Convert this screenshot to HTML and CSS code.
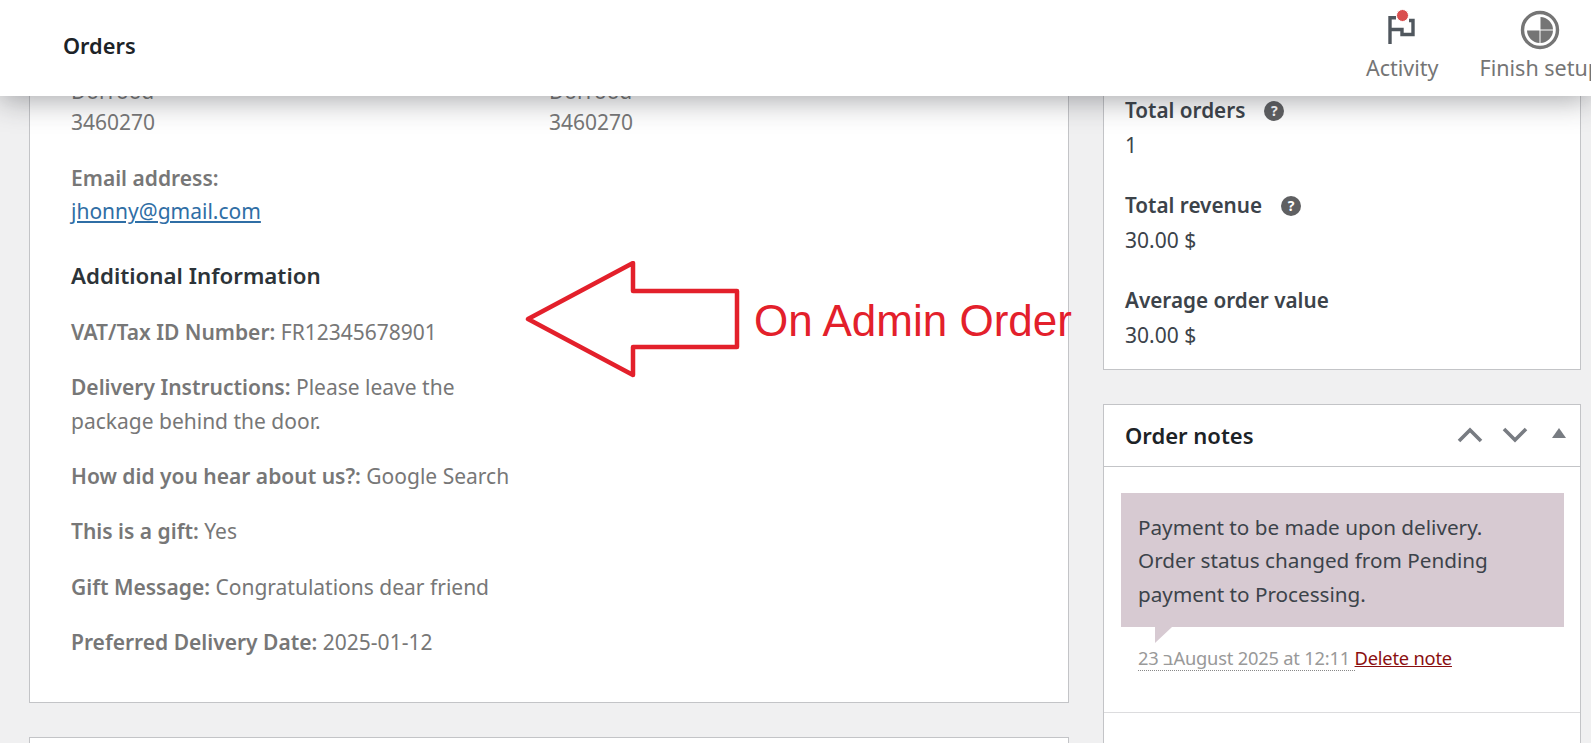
FILE: index.html
```html
<!DOCTYPE html>
<html lang="en">
<head>
<meta charset="utf-8">
<title>Orders</title>
<link rel="stylesheet" href="styles.css">
</head>
<body>
<header class="topbar">
  <h1 class="page-title">Orders</h1>
  <nav class="activity">
    <div class="activity-item">
      <svg class="activity-icon" width="48" height="48" viewBox="0 0 48 48">
        <path class="flag" d="M12 44V17.7H18M13 29.5H24V34.5H35V20.5H31"/>
        <circle class="flag-dot" cx="24.5" cy="15.5" r="6"/>
      </svg>
      <span>Activity</span>
    </div>
    <div class="activity-item setup">
      <svg class="activity-icon" width="42" height="42" viewBox="0 0 42 42">
        <circle class="ring" cx="21" cy="21" r="17.5"/>
        <path class="pie" d="M21.500 8a13 13 0 0 1 12.500 12.500H21.500zM20.500 21.500v12.500a13 13 0 0 1-12.500-12.500zM21.500 21.500h12.500a13 13 0 0 1-12.500 12.500z"/>
      </svg>
      <span>Finish setup</span>
    </div>
  </nav>
</header>
<main class="columns">
  <div class="left-col">
    <section class="card details">
      <div class="addresses">
        <p class="address">Dorrood<br>3460270</p>
        <p class="address">Dorrood<br>3460270</p>
      </div>
      <p class="field"><strong>Email address:</strong><br><a href="#">jhonny@gmail.com</a></p>
      <h3 class="section-title">Additional Information</h3>
      <p class="field"><strong>VAT/Tax ID Number:</strong> FR12345678901</p>
      <p class="field"><strong>Delivery Instructions:</strong> Please leave the package behind the door.</p>
      <p class="field"><strong>How did you hear about us?:</strong> Google Search</p>
      <p class="field"><strong>This is a gift:</strong> Yes</p>
      <p class="field"><strong>Gift Message:</strong> Congratulations dear friend</p>
      <p class="field"><strong>Preferred Delivery Date:</strong> 2025-01-12</p>
      <svg class="annotation-arrow" width="222" height="120" viewBox="0 0 222 120">
        <path d="M3 58L108 2V30H212V86H108V114Z"/>
      </svg>
      <span class="annotation-text">On Admin Order</span>
    </section>
    <section class="card stub"></section>
  </div>
  <aside class="right-col">
    <section class="card stats">
      <div class="stat"><h4>Total orders <span class="help">?</span></h4><p>1</p></div>
      <div class="stat"><h4>Total revenue <span class="help">?</span></h4><p>30.00 $</p></div>
      <div class="stat"><h4>Average order value</h4><p>30.00 $</p></div>
    </section>
    <section class="card notes">
      <div class="notes-head">
        <h2>Order notes</h2>
        <div class="notes-tools">
          <svg width="26" height="16" viewBox="0 0 26 16"><path class="chev" d="M2 14L13 3l11 11"/></svg>
          <svg width="26" height="16" viewBox="0 0 26 16"><path class="chev" d="M2 2l11 11L24 2"/></svg>
          <svg class="tri" width="14" height="10" viewBox="0 0 14 10"><path d="M0 10L7 0l7 10z"/></svg>
        </div>
      </div>
      <div class="notes-body">
        <div class="note-bubble">Payment to be made upon delivery. Order status changed from Pending payment to Processing.</div>
        <p class="note-meta"><abbr>23 בAugust 2025 at 12:11 </abbr><a href="#">Delete note</a></p>
      </div>
      <div class="notes-foot"></div>
    </section>
  </aside>
</main>
</body>
</html>
```
FILE: styles.css
```css
* { box-sizing: border-box; }
html, body { margin: 0; height: 100%; overflow: hidden; }
body {
  background: #f0f0f1;
  color: #3c434a;
  font-family: "Noto Sans", "DejaVu Sans", sans-serif;
  font-size: 21px;
  line-height: 33.4px;
}
p, h1, h2, h3, h4 { margin: 0; }

.topbar {
  position: absolute;
  top: 0; left: 0; right: 0;
  height: 96px;
  z-index: 5;
  background: #fff;
  box-shadow: 0 4px 28px rgba(40, 44, 50, .42);
  display: flex;
  justify-content: space-between;
  align-items: center;
  overflow: hidden;
}
.page-title {
  margin: -5px 0 0 63px;
  font-size: 21.75px;
  font-weight: 600;
  color: #1d2327;
}
.activity { display: flex; gap: 41px; margin-right: -10px; }
.activity-item {
  position: relative;
  display: flex;
  flex-direction: column;
  align-items: center;
  color: #757575;
  white-space: nowrap;
  padding-top: 51px;
  height: 96px;
  font-size: 21.5px;
}
.activity-icon { position: absolute; top: 0; left: 50%; margin-left: -24px; }
.setup .activity-icon { margin-left: -21px; top: 9px; }
.flag { fill: none; stroke: #50575e; stroke-width: 3.4; }
.flag-dot { fill: #d94f4f; stroke: #fff; stroke-width: 1; }
.ring { fill: none; stroke: #757575; stroke-width: 3.4; }
.pie { fill: #757575; }

.columns {
  display: flex;
  gap: 34px;
  height: 743px;
  overflow: hidden;
  padding: 0 10px 0 29px;
}
.card { background: #fff; border: 1px solid #c3c4c7; }
.left-col { width: 1040px; flex: none; }
.right-col { flex: 1; min-width: 0; }

.details {
  position: relative;
  height: 703px;
  padding: 75px 41px 0;
}
.addresses { display: flex; padding-bottom: 2px; }
.address { width: 478px; color: #777; line-height: 31px; }
.field { color: #777; margin-top: 22px; width: 445px; }
.field strong { font-weight: 600; }
.field a { color: #2f6ea5; }
.section-title {
  margin-top: 30px;
  font-size: 22.3px;
  line-height: 33px;
  font-weight: 600;
  color: #2c3338;
}
.section-title + .field { margin-top: 24px; }
.annotation-arrow { position: absolute; left: 495px; top: 260px; }
.annotation-arrow path { fill: none; stroke: #e3202b; stroke-width: 4.5; stroke-linejoin: round; }
.annotation-text {
  position: absolute;
  left: 724px;
  top: 295px;
  font-family: "Liberation Sans", Arial, sans-serif;
  font-size: 44px;
  line-height: 50px;
  color: #e3202b;
  white-space: nowrap;
}
.stub { margin-top: 34px; height: 60px; }

.stats { height: 370px; padding: 93px 21px 0; }
.stat + .stat { margin-top: 26.5px; }
.stat p { margin-top: 1.5px; }
.stat h4 { font-size: 20.7px; font-weight: 600; display: flex; align-items: center; gap: 19px; }
.help {
  width: 20px; height: 20px;
  border-radius: 50%;
  background: #5f6062;
  color: #fff;
  font-size: 14px;
  font-weight: 700;
  line-height: 20px;
  text-align: center;
}
.notes { margin-top: 34px; height: 400px; }
.notes-head {
  height: 62px;
  padding: 0 14px 0 21px;
  border-bottom: 1px solid #c3c4c7;
  display: flex;
  align-items: center;
  justify-content: space-between;
}
.notes-head h2 { font-size: 22px; font-weight: 600; color: #1d2327; margin-top: 1px; }
.notes-tools { display: flex; align-items: center; gap: 19px; margin-top: -2px; }
.chev { fill: none; stroke: #787c82; stroke-width: 3.6; }
.tri { margin-left: 5px; margin-top: -3px; }
.tri path { fill: #787c82; }
.notes-body { padding: 26px 16px 0 17px; height: 246px; border-bottom: 1px solid #dcdcde; }
.note-bubble {
  position: relative;
  background: #d7cad2;
  padding: 18px 40px 16px 17px;
  height: 134px;
  font-size: 20.7px;
  color: #3c434a;
}
.note-bubble::after {
  content: "";
  position: absolute;
  left: 34px;
  top: 100%;
  border-style: solid;
  border-width: 16px 17px 0 0;
  border-color: #d7cad2 transparent transparent transparent;
}
.note-meta { padding: 14px 0 0 17px; font-size: 18.3px; letter-spacing: -0.2px; line-height: 34px; }
.note-meta abbr { color: #999; border-bottom: 1px dotted #888; }
.note-meta a { color: #8a0f0f; }
```
